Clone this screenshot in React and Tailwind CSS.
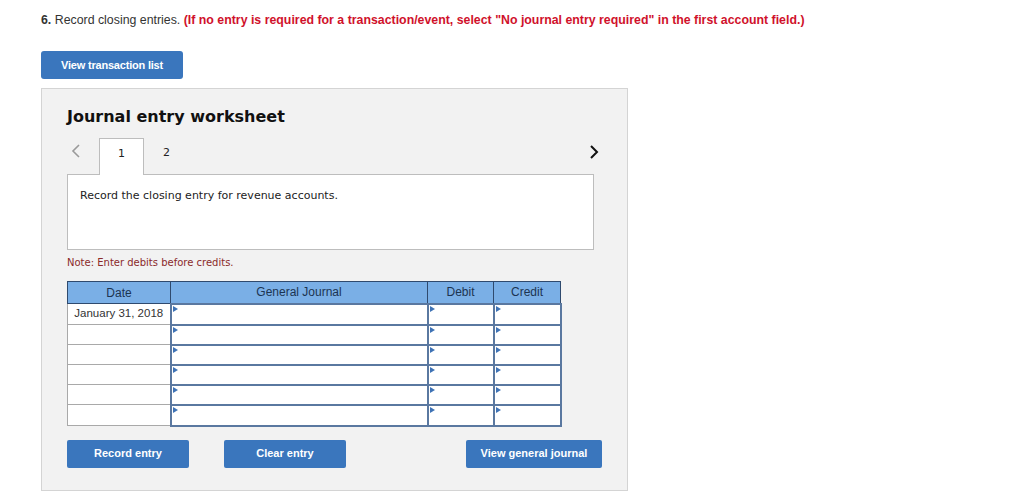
import React from "react";

const rows = ["January 31, 2018", "", "", "", "", ""];
const rowHeights = ["h-[21px]", "h-[20px]", "h-[20px]", "h-[20px]", "h-[20px]", "h-[21px]"];

function Marker() {
  return (
    <span className="absolute left-[1px] top-[1px] w-0 h-0 border-y-[3px] border-y-transparent border-l-[5px] border-l-[#3f73b5]" />
  );
}

function InputCell({ h }) {
  return (
    <td className={`relative ${h} p-0 bg-white border-2 border-[#5a78a0]`}>
      <Marker />
    </td>
  );
}

export default function App() {
  return (
    <div className="min-h-[496px] bg-white pl-[41px] pt-[13px] font-['Liberation_Sans',Arial,sans-serif]">
      <p className="text-[12.35px] leading-[14px] text-[#333]">
        <span className="font-bold">6.</span> Record closing entries.{" "}
        <span className="font-bold text-[#d0112b]">
          (If no entry is required for a transaction/event, select "No journal entry required" in the first account field.)
        </span>
      </p>

      <button className="mt-[24px] w-[142px] h-[28px] rounded-[3px] bg-[#3a76bd] text-white text-[11px] font-bold tracking-[-0.2px]">
        View transaction list
      </button>

      <div className="mt-[9px] w-[587px] h-[403px] bg-[#f2f2f2] border border-[#d4d4d4] px-[25px] pt-[18px] font-['DejaVu_Sans',Verdana,sans-serif]">
        <h2 className="text-[16px] leading-[20px] font-bold text-[#111]">Journal entry worksheet</h2>

        <div className="mt-[10px] w-[526px] flex items-end h-[37px]">
          <div className="w-[32px] h-[37px] flex items-start pt-[7px] pl-[4px]">
            <svg width="10" height="14" viewBox="0 0 10 14">
              <polyline points="8,1 2,7 8,13" fill="none" stroke="#9a9a9a" strokeWidth="1.6" />
            </svg>
          </div>
          <div className="relative w-[45px] h-[37px] bg-white border border-[#bdbdbd] border-b-0 flex items-start pt-[7px] justify-center text-[11px] text-[#222] z-10 -mb-px">
            1
          </div>
          <div className="w-[45px] h-[37px] flex items-start pt-[8px] justify-center text-[11px] text-[#222]">2</div>
          <div className="flex-1 h-[37px] flex items-start pt-[8px] justify-end">
            <svg width="10" height="14" viewBox="0 0 10 14" className="mr-[-6px]">
              <polyline points="2,1 8,7 2,13" fill="none" stroke="#111" strokeWidth="2" />
            </svg>
          </div>
        </div>

        <div className="w-[527px] h-[76px] bg-white border border-[#bdbdbd] pl-[12px] pt-[14px] text-[11px] leading-[14px] text-[#222]">
          Record the closing entry for revenue accounts.
        </div>

        <p className="mt-[6px] text-[10px] leading-[13px] text-[#8b2a2a]">Note: Enter debits before credits.</p>

        <table className="mt-[12px] border-collapse font-['Liberation_Sans',Arial,sans-serif] text-[12px]">
          <thead>
            <tr className="h-[22px] bg-[#7aafe6] text-[#1c3452]">
              <th className="w-[103px] p-0 border border-[#2f4a6e] font-normal">Date</th>
              <th className="w-[257px] p-0 border border-[#2f4a6e] font-normal">General Journal</th>
              <th className="w-[66px] p-0 border border-[#2f4a6e] font-normal">Debit</th>
              <th className="w-[67px] p-0 border border-[#2f4a6e] font-normal">Credit</th>
            </tr>
          </thead>
          <tbody>
            {rows.map((d, i) => (
              <tr key={i}>
                <td className={`${rowHeights[i]} p-0 bg-white border border-[#a9a9a9] text-center text-[11.5px] text-[#333]`}>{d}</td>
                <InputCell h={rowHeights[i]} />
                <InputCell h={rowHeights[i]} />
                <InputCell h={rowHeights[i]} />
              </tr>
            ))}
          </tbody>
        </table>

        <div className="mt-[13px] w-[535px] flex font-['Liberation_Sans',Arial,sans-serif]">
          <button className="w-[122px] h-[28px] rounded-[2px] bg-[#3a76bd] text-white text-[11px] font-bold">Record entry</button>
          <button className="ml-[35px] w-[122px] h-[28px] rounded-[2px] bg-[#3a76bd] text-white text-[11px] font-bold">Clear entry</button>
          <button className="ml-auto w-[136px] h-[28px] rounded-[2px] bg-[#3a76bd] text-white text-[11px] font-bold">View general journal</button>
        </div>
      </div>
    </div>
  );
}
